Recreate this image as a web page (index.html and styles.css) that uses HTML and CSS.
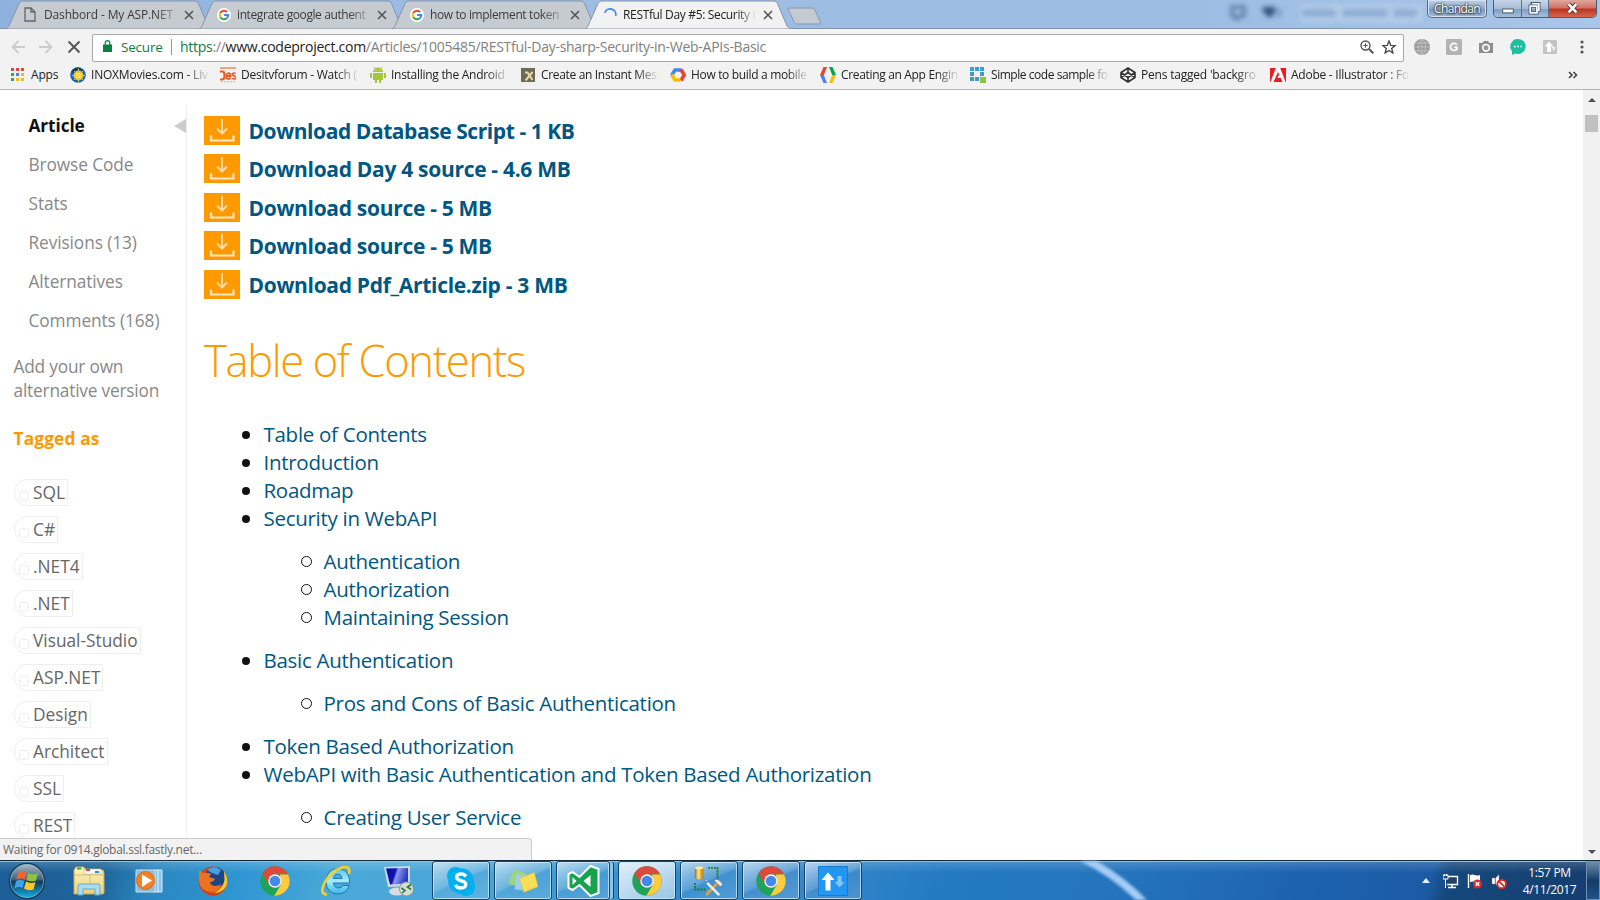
FILE: index.html
```html
<!DOCTYPE html>
<html lang="en">
<head>
<meta charset="utf-8">
<title>RESTful Day #5: Security</title>
<link rel="stylesheet" href="styles.css">
</head>
<body>
<svg class="defs" aria-hidden="true">
  <defs>
    <linearGradient id="orb" x1="0" y1="0" x2="0" y2="1"><stop offset="0" stop-color="#a9bdcb"/><stop offset=".45" stop-color="#44647e"/><stop offset=".52" stop-color="#0b3a5c"/><stop offset="1" stop-color="#16b7ea"/></linearGradient>
    <linearGradient id="folder" x1="0" y1="0" x2="0" y2="1"><stop offset="0" stop-color="#fdf5c4"/><stop offset="1" stop-color="#ecd078"/></linearGradient>
    <linearGradient id="screen" x1="0" y1="0" x2="1" y2=".25"><stop offset="0" stop-color="#0a0aa0"/><stop offset=".45" stop-color="#1111b8"/><stop offset=".55" stop-color="#8b9bf0"/><stop offset="1" stop-color="#2a3bc8"/></linearGradient>
    <linearGradient id="gold" x1="0" y1="0" x2="1" y2="0"><stop offset="0" stop-color="#a86a00"/><stop offset=".4" stop-color="#ffe68a"/><stop offset="1" stop-color="#b87800"/></linearGradient>
    <linearGradient id="ieblue" x1="0" y1="0" x2="0" y2="1"><stop offset="0" stop-color="#5cc4ee"/><stop offset=".5" stop-color="#a5ecfd"/><stop offset="1" stop-color="#38b4e8"/></linearGradient>
    <radialGradient id="fox"><stop offset="0" stop-color="#e8681c"/><stop offset=".7" stop-color="#e2571a"/><stop offset="1" stop-color="#c83c12"/></radialGradient>
    <symbol id="tab" viewBox="0 0 206 29"><path d="M0 29 L.5 28.5 Q2 28 3 26 L13 3.5 Q14 1 16.500 1 H189 Q191.500 1 192.500 3.500 L202 26 Q203 28 205.500 28.500 L206 29Z"/></symbol>
    <symbol id="x" viewBox="0 0 10 10"><path d="M1 1 9 9M9 1 1 9" fill="none" stroke="#555" stroke-width="1.600"/></symbol>
    <symbol id="google" viewBox="0 0 16 16"><circle cx="8" cy="8" r="8" fill="#fff"/><g fill="none" stroke-width="2.300"><path d="M11.600 4.600A4.900 4.900 0 0 0 3.700 5.800" stroke="#ea4335"/><path d="M3.700 5.800A4.900 4.900 0 0 0 3.700 10.200" stroke="#fbbc05"/><path d="M3.700 10.200A4.900 4.900 0 0 0 11.200 11.700" stroke="#34a853"/><path d="M11.200 11.700A4.900 4.900 0 0 0 12.900 8.100H8.100" stroke="#4285f4"/></g></symbol>
    <symbol id="chrome" viewBox="0 0 30 30"><circle cx="15" cy="15" r="14.700" fill="#1fa25a"/><path d="M2.300 7.600A14.700 14.700 0 0 1 28.200 8.500H15L9 18.200Z" fill="#dc4a3d"/><path d="M28.200 8.500A14.700 14.700 0 0 1 14.300 29.700L21 18.500 20 8.500Z" fill="#fccb40"/><circle cx="15" cy="15" r="6.700" fill="#f4f4f4"/><circle cx="15" cy="15" r="5.300" fill="#4588ec"/></symbol>
    <symbol id="dl" viewBox="0 0 36 29"><path d="M0 0H36V29H0Z" fill="#f90"/><path d="M7 19.500V24.500H29.500V19.500" fill="none" stroke="#ffe9c4" stroke-width="2.200"/><path d="M18 3V17M13 12.500 18 17.500 23 12.500" fill="none" stroke="#ffdca6" stroke-width="2"/></symbol>
  </defs>
</svg>

<div class="screen">
  <header class="tabstrip">
    <svg class="ghost" viewBox="0 0 380 28"><path d="M12 7h12v9h-4l-3 3-2-3h-3z" fill="none" stroke="#54779f" stroke-width="3"/><path d="M43 7h12v5l-5 6-7-6z" fill="#2f4f7a"/><path d="M59 9v8" stroke="#6687b0" stroke-width="3"/><rect x="80" y="5" width="122" height="17" fill="#b5cdea"/><path d="M82 13h115" stroke="#8faed3" stroke-width="8" stroke-dasharray="34 6 46 5"/></svg>
    <div class="tab"><svg class="shape"><use href="#tab"/></svg><svg class="fav page" viewBox="0 0 12 15"><path d="M1 1h6l4 4v9H1zM7 1v4h4" fill="none" stroke="#666" stroke-width="1.300"/></svg><span class="tt t1">Dashbord - My ASP.NET</span><svg class="close"><use href="#x"/></svg></div>
    <div class="tab"><svg class="shape"><use href="#tab"/></svg><svg class="fav"><use href="#google"/></svg><span class="tt t2">integrate google authent</span><svg class="close"><use href="#x"/></svg></div>
    <div class="tab"><svg class="shape"><use href="#tab"/></svg><svg class="fav"><use href="#google"/></svg><span class="tt t3">how to implement token</span><svg class="close"><use href="#x"/></svg></div>
    <div class="tab active"><svg class="shape"><use href="#tab"/></svg><svg class="fav" viewBox="0 0 16 16"><path d="M2 5.500A6.500 6.500 0 0 1 14.500 9" fill="none" stroke="#4285f4" stroke-width="2"/></svg><span class="tt t4">RESTful Day #5: Security i</span><svg class="close"><use href="#x"/></svg></div>
    <svg class="newtab" viewBox="0 0 35 18"><path d="M3 1H25Q27 1 28 3L33.500 15Q34 17 32 17H10Q8 17 7 15L1.500 3Q1 1 3 1Z" fill="#c3cad2" stroke="#8698b4"/></svg>
    <div class="user">Chandan</div>
    <div class="winbtns">
      <span class="wb"><svg viewBox="0 0 28 18"><rect x="9" y="9" width="11" height="4" fill="#fff" stroke="#4a5870"/></svg></span><span class="wb max"><svg viewBox="0 0 27 18"><g fill="none" stroke="#4a5870" stroke-width="3.400"><path d="M10.500 4V3.500h7v7h-1"/><rect x="8.500" y="6" width="7" height="7"/></g><g fill="none" stroke="#fff" stroke-width="1.700"><path d="M10.500 3.500h7v7h-1.500"/><rect x="8.500" y="6" width="7" height="7"/></g></svg></span><span class="wb shut"><svg viewBox="0 0 48 18"><path d="M20 4 28 12.500M28 4 20 12.500" stroke="#5b3038" stroke-width="4.500"/><path d="M20 4 28 12.500M28 4 20 12.500" stroke="#fff" stroke-width="2.700"/></svg></span>
    </div>
  </header>

  <nav class="toolbar">
    <svg class="nav" viewBox="0 0 16 16"><path d="M15 8H2.500M8.500 2 2.500 8l6 6" fill="none" stroke="#ccc" stroke-width="1.800"/></svg>
    <svg class="nav" viewBox="0 0 16 16"><path d="M1 8H13.500M7.500 2l6 6-6 6" fill="none" stroke="#ccc" stroke-width="1.800"/></svg>
    <svg class="nav" viewBox="0 0 16 16"><path d="M2.500 2.500l11 11M13.500 2.500l-11 11" fill="none" stroke="#555" stroke-width="1.900"/></svg>
    <div class="omnibox">
      <svg class="lock" viewBox="0 0 9 12"><path d="M0 4.500h9V12H0z" fill="#0b8043"/><path d="M2.200 5V3a2.300 2.300 0 0 1 4.600 0V5" fill="none" stroke="#0b8043" stroke-width="1.200"/></svg>
      <span class="secure">Secure</span><i class="vbar"></i>
      <span class="url"><span class="scheme">https</span>://<b>www.codeproject.com</b>/Articles/1005485/RESTful-Day-sharp-Security-in-Web-APIs-Basic</span>
      <svg class="mag" viewBox="0 0 14 14"><circle cx="5.500" cy="5.500" r="4.500" fill="none" stroke="#555" stroke-width="1.400"/><path d="M9 9l4.300 4.300" stroke="#555" stroke-width="2"/><path d="M5.500 3.300v4.400M3.300 5.500h4.400" stroke="#555"/></svg>
      <svg class="star" viewBox="0 0 14 14"><path d="M7 1l1.700 4.300 4.500.3-3.500 2.900 1.200 4.500L7 10.500 3.100 13l1.200-4.500L.8 5.600l4.500-.3z" fill="none" stroke="#444" stroke-width="1.300"/></svg>
    </div>
    <div class="exts">
      <svg viewBox="0 0 16 16"><circle cx="8" cy="8" r="8" fill="#9a9a9a"/><g fill="none" stroke="#c9c9c9" stroke-width=".8"><ellipse cx="8" cy="8" rx="3.500" ry="7.500"/><path d="M8 0v16M0 8h16M1.500 4h13M1.500 12h13"/></g></svg>
      <svg viewBox="0 0 16 16"><rect width="16" height="16" rx="1" fill="#b3b3b3"/><path d="M10.900 5.700A3.600 3.600 0 1 0 11 10V8.300H8.300" fill="none" stroke="#fff" stroke-width="1.700"/></svg>
      <svg viewBox="0 0 16 16"><path d="M1 4h3.500l1.500-2h4l1.500 2H15v10H1z" fill="#8d8d8d"/><circle cx="8" cy="8.800" r="3.300" fill="#999" stroke="#fff" stroke-width="1.600"/></svg>
      <svg viewBox="0 0 16 16"><path d="M8 0a7.500 7.500 0 1 1-2.500 14.500L2 16V12.200A7.500 7.500 0 0 1 8 0z" fill="#1dbf9f"/><path d="M4 7.500h1.700M7.200 7.500h1.700M10.400 7.500h1.700" stroke="#fff" stroke-width="1.500"/></svg>
      <svg viewBox="0 0 16 16"><rect x="1" y="1" width="14" height="14" rx="1" fill="#c4c4c4"/><path d="M7 2.500 11.500 7.500H9V13H5V7.500H2.500z" fill="#fff"/><path d="M10 8h3.500l-1.700 4z" fill="#fff"/></svg>
      <svg viewBox="0 0 16 16"><g fill="#555"><circle cx="8" cy="3" r="1.600"/><circle cx="8" cy="8" r="1.600"/><circle cx="8" cy="13" r="1.600"/></g></svg>
    </div>
  </nav>

  <nav class="bookmarks">
    <div class="apps"><svg viewBox="0 0 13 13"><g><path d="M0 0h3v3H0zM5 0h3v3H5zM10 0h3v3h-3z" fill="#ea4335"/><path d="M0 5h3v3H0z" fill="#34a853"/><path d="M5 5h3v3H5z" fill="#4285f4"/><path d="M10 5h3v3h-3zM5 10h3v3H5zM10 10h3v3h-3z" fill="#f9b916"/><path d="M0 10h3v3H0z" fill="#34a853"/></g></svg><span>Apps</span></div>
    <div class="bm"><svg viewBox="0 0 16 16"><circle cx="8" cy="8" r="7.800" fill="#1565b5"/><path d="M1 5A8 8 0 0 1 9 .5L13 4 8 8z" fill="#173f63"/><circle cx="8.500" cy="8.500" r="5" fill="#f7c62f"/><path d="M8.500 1.500v14M2 8.500h13M4 4l9 9M13 4l-9 9" stroke="#bfc54a"/><circle cx="8.500" cy="8.500" r="3" fill="#ffdf45"/></svg><span class="b1">INOXMovies.com - Liv</span></div>
    <div class="bm"><svg viewBox="0 0 16 16"><path d="M0 0h16v2H0z" fill="#f6a27a"/><path d="M0 4.500h2q2.500 0 2.500 3v2q0 3-2.500 3H0" fill="none" stroke="#f05a22" stroke-width="2.200"/><path d="M10.500 10.500q-1 2-2.500 1.500-2-.8-1.500-3.500.6-2.500 2.500-2.300 1.800.4 1.500 2.800H7M15.500 6.500q-3-1-3 1 0 1 2 1.500t1.500 2q-1 1.500-3.800.5" fill="none" stroke="#f05a22" stroke-width="1.800"/><path d="M1 14.800h14" stroke="#bbb" stroke-dasharray="2 1"/></svg><span class="b2">Desitvforum - Watch (</span></div>
    <div class="bm"><svg viewBox="0 0 16 16"><g fill="#a4c639"><path d="M3 5a5 4.500 0 0 1 10 0zM3 6h10v7H3zM0 6h2v5H0zM14 6h2v5h-2zM5 12h2v4H5zM9 12h2v4H9z"/><path d="M4 0l2 2M12 0l-2 2" stroke="#a4c639"/></g><path d="M5.500 3h1M9.500 3h1" stroke="#fff"/></svg><span class="b3">Installing the Android</span></div>
    <div class="bm"><svg viewBox="0 0 16 16"><path d="M1 1h14v14H1z" fill="#6e6a55"/><path d="M5 5.500h2.500l5 7.500M12.500 5l-7 8.500" fill="none" stroke="#ecd9a8" stroke-width="2"/></svg><span class="b4">Create an Instant Mes</span></div>
    <div class="bm"><svg viewBox="0 0 16 16"><g fill="none" stroke-width="3.600"><path d="M1.600 8.500 5 3h6.500" stroke="#4285f4"/><path d="M11 2.500 14.200 8 11 13.500" stroke="#ea4335"/><path d="M1.500 7.500 5 13h5.500" stroke="#fbbc05"/></g></svg><span class="b5">How to build a mobile</span></div>
    <div class="bm"><svg viewBox="0 0 16 16"><path d="M3.500 0H7L3.800 8H0z" fill="#ea4335"/><path d="M0 8h3.800L7 16H3.500z" fill="#4285f4"/><path d="M9 0h3.500L16 8h-3.800z" fill="#0f9d58"/><path d="M12.200 8H16l-3.500 8H9z" fill="#fbbc05"/></svg><span class="b6">Creating an App Engin</span></div>
    <div class="bm"><svg viewBox="0 0 16 16"><path d="M0 0h4v4H0zM5 0h4v4H5zM10 0h4v4h-4zM0 5h4v4H0zM10 5h4v4h-4zM0 10h4v4H0zM5 10h4v4H5z" fill="#3d9bd4"/><path d="M10 10h6v6h-6z" fill="#8cc63f"/></svg><span class="b7">Simple code sample fo</span></div>
    <div class="bm"><svg viewBox="0 0 16 16"><path d="M8 1 15 5.500v5L8 15 1 10.500v-5zM8 1v4.500M8 15v-4.500M1 5.500l7 5 7-5M1 10.500l7-5 7 5" fill="none" stroke="#333" stroke-width="1.600" stroke-linejoin="round"/></svg><span class="b8">Pens tagged 'backgro</span></div>
    <div class="bm"><svg viewBox="0 0 16 14"><path d="M0 0h16v14H0z" fill="#ec1c24"/><path d="M5.800 0h4.400L15.500 14h-3L10.800 10H7.500L8.800 7 10 8 8 4 3.500 14H.5z" fill="#fff"/></svg><span class="b9">Adobe - Illustrator : Fo</span></div>
    <svg class="more" viewBox="0 0 10 8"><path d="M1 1l3 3-3 3M5.500 1l3 3-3 3" fill="none" stroke="#444" stroke-width="1.600"/></svg>
  </nav>

  <main class="page-view">
    <aside class="sidebar">
      <ul class="menu">
        <li class="here">Article<i class="ptr"></i></li><li>Browse Code</li><li>Stats</li><li>Revisions (13)</li><li>Alternatives</li><li>Comments (168)</li>
      </ul>
      <p class="add">Add your own<br>alternative version</p>
      <h4>Tagged as</h4>
      <ul class="tags">
        <li>SQL</li><li>C#</li><li>.NET4</li><li>.NET</li><li>Visual-Studio</li><li>ASP.NET</li><li>Design</li><li>Architect</li><li>SSL</li><li>REST</li>
      </ul>
    </aside>
    <article class="article">
      <ul class="downloads">
        <li><svg><use href="#dl"/></svg><span class="tight">Download Database Script - 1 KB</span></li>
        <li><svg><use href="#dl"/></svg><span>Download Day 4 source - 4.6 MB</span></li>
        <li><svg><use href="#dl"/></svg><span>Download source - 5 MB</span></li>
        <li><svg><use href="#dl"/></svg><span>Download source - 5 MB</span></li>
        <li><svg><use href="#dl"/></svg><span>Download Pdf_Article.zip - 3 MB</span></li>
      </ul>
      <h2><span>Table of Contents</span></h2>
      <ul class="toc">
        <li><span>Table of Contents</span></li><li><span>Introduction</span></li><li><span>Roadmap</span></li>
        <li><span>Security in WebAPI</span><ul><li><span>Authentication</span></li><li><span>Authorization</span></li><li><span>Maintaining Session</span></li></ul></li>
        <li><span>Basic Authentication</span><ul><li><span>Pros and Cons of Basic Authentication</span></li></ul></li>
        <li><span>Token Based Authorization</span></li>
        <li><span>WebAPI with Basic Authentication and Token Based Authorization</span><ul><li><span>Creating User Service</span></li></ul></li>
      </ul>
    </article>
    <div class="scroll"><i class="up"></i><i class="thumb"></i><i class="down"></i></div>
    <div class="status"><span>Waiting for 0914.global.ssl.fastly.net...</span></div>
  </main>

  <footer class="taskbar">
    <svg class="swoosh" viewBox="0 0 90 40"><path d="M10-4Q48 14 78 46" fill="none" stroke="#a6cdf6" stroke-width="8"/></svg>
    <div class="pins">
      <svg class="orb" viewBox="0 0 38 38"><circle cx="19" cy="19" r="17.500" fill="url(#orb)" stroke="#173e5c" stroke-width="1.500"/><circle cx="19" cy="19" r="16.500" fill="none" stroke="#a3c4d8" stroke-opacity=".6"/><path d="M10 11q4-3 8.500-.5L17 17.500q-4-2-8.500 0z" fill="#f0652a"/><path d="M20 11q4 2.500 10 0l-2 7.500q-5 2-9.500-.5z" fill="#8cc63f"/><path d="M8 19q4-2 8.500 0l-2 7q-4-2-8 .5z" fill="#3fa4e8"/><path d="M18 19.500q4.500 2.500 9.500.5l-2 7.500q-5 2-9.500-1z" fill="#fcc827"/></svg>
      <svg class="pin" viewBox="0 0 32 30"><path d="M1 4l2-3h8l1 3h18l1 3v20l-1 1H1z" fill="url(#folder)" stroke="#c9aa54"/><path d="M11 3h17v5H11z" fill="#fff" stroke="#ccb370" stroke-width=".7"/><path d="M4 1.500h4v2H4z" fill="#2caa3c"/><path d="M13 3h4v2h-4z" fill="#e5442e"/><path d="M22 5h4v2h-4z" fill="#298fd8"/><path d="M1 9h30M17 9v8" stroke="#d9bd6a"/><path d="M5 29V20q0-2 2-2h18q2 0 2 2v9h-5v-6H10v6z" fill="#a9dcf3" stroke="#5daed6" fill-opacity=".9"/></svg>
      <svg class="pin" viewBox="0 0 32 30"><path d="M19 4h8v22h-8z" fill="#8dc4e6" stroke="#d4eefc"/><path d="M23 4v22" stroke="#e4f6ff"/><path d="M1 4h19v22H1z" fill="#8abde0" stroke="#c3e2f4"/><circle cx="10.500" cy="14.500" r="9" fill="#f58220" stroke="#e86613"/><path d="M7 8.500 17 14.500 7 21z" fill="#fff"/></svg>
      <svg class="pin" viewBox="0 0 32 30"><circle cx="16" cy="15" r="14.500" fill="url(#fox)"/><circle cx="18" cy="11.500" r="10.500" fill="#1b4584"/><path d="M10 4q7-6 14 0l-3 5q-6-1-11-5z" fill="#4b9ede"/><path d="M27 5q5 8 2.500 15-4 7-12 7 9-5 10-13z" fill="#f9c62e"/><path d="M2 4l4 3q5-1 8 1l-2 3q4 1 6 2-1 3-5 3 1 4 5 4 4 0 6-2-2 7-9 8Q3 25 2 16z" fill="#ec7222"/></svg>
      <svg class="pin" viewBox="-1 0 32 30"><use href="#chrome" width="30" height="30"/></svg>
      <svg class="pin" viewBox="0 0 32 30"><path d="M16.500 2.500C24 2.500 29 8 28.500 17H12.500Q13 22 17.500 22 20.500 22 22 19.500H28.200Q25.500 28 16.500 28 5.500 27.500 5 15.500 5.500 3 16.500 2.500zM12.500 12.500H21Q20.500 8 17 8 13 8 12.500 12.500z" fill="url(#ieblue)" stroke="#1571ad" stroke-width=".9" fill-rule="evenodd"/><path d="M6 28.500Q-2 28 3.500 17 10 5 21 1.500 30-1 28 8" fill="none" stroke="#f6cf24" stroke-width="2.600"/></svg>
      <svg class="pin" viewBox="0 0 32 30"><path d="M1 1 27 0 27 20 5 21z" fill="#d3d6dc"/><path d="M3 2.500 25 2 25 17.500 7 18.500z" fill="url(#screen)"/><ellipse cx="14" cy="25.500" rx="8" ry="4" fill="#d9dbe0"/><circle cx="23.500" cy="23" r="7" fill="#d7dbd8" stroke="#8d9694"/><path d="M18.500 22l3.500 2.500-3 2.500M28 18.500l-3.500 2.500 3.500 2.500" fill="none" stroke="#258325" stroke-width="1.600"/></svg>
    </div>
    <div class="tasks">
      <span class="task"><svg viewBox="0 0 30 30"><rect x="1" y="1" width="17" height="17" rx="8.500" fill="#00aff0"/><rect x="11" y="12" width="18" height="18" rx="8.500" fill="#00aff0"/><circle cx="15" cy="15" r="12.800" fill="#00aff0"/><path d="M20 10.500Q18 7.700 14.500 8 10.500 8.300 10.700 11.500 11 14 15.300 14.800 20 15.800 19.800 18.500 19.500 22 15 22 10.800 22 9.500 18.800" fill="none" stroke="#fff" stroke-width="3.300"/></svg></span>
      <span class="task"><svg viewBox="0 0 32 30"><path d="M6 3 20 7 15 22 0 18z" fill="#9bd67c"/><path d="M9 8 21 9 20 25 7 24z" fill="#9ecdf2"/><path d="M12 12 28 6 32 21 17 27z" fill="#f9de57" stroke="#e0bf35" stroke-width=".7"/></svg></span>
      <span class="task vs"><svg viewBox="0 0 32 32"><path d="M23 1 31 4V28L23 31 12 20 5 25 1 23V9L5 7 12 12z" fill="#16a34e" stroke="#fff" stroke-width="2"/><path d="M23 10v12l-7-6zM5 12v8l4-4z" fill="#fff"/></svg></span>
      <span class="task on"><svg viewBox="0 0 30 30"><use href="#chrome"/></svg></span>
      <span class="task"><svg viewBox="0 0 32 32"><path d="M1 2h9v11q-4.500 2-9 0z" fill="url(#gold)"/><ellipse cx="5.500" cy="2" rx="4.500" ry="1.500" fill="#ffe899"/><path d="M15 2h10v11M1 18v7h11" fill="none" stroke="#167c2c" stroke-width="2" stroke-dasharray="2 1.200"/><path d="M13 31 26 17" stroke="#e5a32b" stroke-width="3"/><path d="M14 18 27 31" stroke="#edf0f3" stroke-width="2.600"/><path d="M11 16l3 1 1-2M21 15q5-3 10 5l-3 2-4-4z" stroke="#59616c" stroke-width=".7" fill="#e8ebef"/></svg></span>
      <span class="task"><svg viewBox="0 0 30 30"><use href="#chrome"/></svg></span>
      <span class="task"><svg viewBox="0 0 30 30"><path d="M.5.500h29v29H.5z" fill="#2196f3" stroke="#167cd0"/><path d="M10 6.500 16.500 14H12.500V24.500H7.500V14H3.500z" fill="#fff"/><path d="M19.500 10h4v6h3l-5 5.500-5-5.500h3z" fill="#84c5f8"/></svg></span>
    </div>
    <div class="tray">
      <svg class="ta" viewBox="0 0 8 5"><path d="M0 5 4 0 8 5z" fill="#e8f0f8"/></svg>
      <svg viewBox="0 0 16 16"><path d="M5 3.500h9.500v8H4" fill="#253f5c" stroke="#fff" stroke-width="1.300"/><path d="M5 14.500h8M9 12v2" stroke="#fff" stroke-width="1.500"/><path d="M2.500 6v9M0 2h5v4H0zM1.500 1v2M3.500 1v2" fill="none" stroke="#fff" stroke-width="1"/></svg>
      <svg viewBox="0 0 16 16"><path d="M1.500 1v14" stroke="#fff" stroke-width="1.400"/><path d="M3 2q3-1 5 0t5 0v7q-3 1-5 0T3 9z" fill="#fff"/><circle cx="10.500" cy="11" r="4.500" fill="#dc2929"/><path d="M8.700 9.200l3.600 3.600M12.300 9.200l-3.600 3.600" stroke="#fff" stroke-width="1.500"/></svg>
      <svg viewBox="0 0 16 16"><path d="M1 5h3V11H1zM4.500 5 8 1.500V14L4.500 11z" fill="#fff" stroke="#777" stroke-width=".4"/><circle cx="10.700" cy="11" r="4.300" fill="#fff" stroke="#e02424" stroke-width="1.900"/><path d="M8 8.300l5.400 5.400" stroke="#e02424" stroke-width="1.800"/></svg>
      <div class="clock"><span>1:57 PM</span><span>4/11/2017</span></div>
      <i class="peek"></i>
    </div>
  </footer>
</div>
</body>
</html>
```

FILE: styles.css
```css
* { box-sizing: border-box; }
body { margin: 0; font-family: "Open Sans", "Noto Sans", sans-serif; font-size: 12px; overflow: hidden; }
ul, p, h2, h4 { margin: 0; padding: 0; font-weight: normal; }
ul { list-style: none; }
svg { display: block; flex: none; }
.defs { position: absolute; width: 0; height: 0; }
.screen { width: 1600px; height: 900px; display: flex; flex-direction: column; background: #fff; overflow: hidden; }

/* tab strip */
.tabstrip { position: relative; flex: none; height: 29px; display: flex; padding-left: 6px; background: linear-gradient(90deg, #8fb2dc, #9dbde3 30%, #9dbde3 75%, #a9c6e8); border-bottom: 1px solid #7f92b0; }
.ghost { position: absolute; left: 1220px; top: 0; width: 380px; height: 28px; filter: blur(2.500px); }
.tab { position: relative; flex: none; width: 206px; height: 29px; margin-right: -13px; padding: 0 17px; display: flex; align-items: center; color: #3b3b3b; }
.shape { position: absolute; left: 0; top: 0; width: 206px; height: 29px; fill: #c6cbd2; stroke: #8595ae; stroke-width: 1; }
.tab.active { z-index: 2; color: #222; height: 30px; }
.active .shape { fill: #f2f2f2; }
.fav { position: relative; width: 14px; height: 14px; margin-left: 1px; }
.fav.page { width: 12px; height: 15px; margin: 0 2px 0 1px; }
.tt { position: relative; flex: none; width: 133px; margin-left: 6px; margin-right: 7px; white-space: nowrap; line-height: 18px; letter-spacing: -.15px; -webkit-mask-image: linear-gradient(90deg, #000 112px, transparent 137px); mask-image: linear-gradient(90deg, #000 112px, transparent 137px); }
.t2 { letter-spacing: -.4px; }
.t3 { letter-spacing: -.38px; }
.t4 { letter-spacing: -.34px; -webkit-mask-image: linear-gradient(90deg, #000 114px, transparent 134px); mask-image: linear-gradient(90deg, #000 114px, transparent 134px); }
.close { position: relative; width: 10px; height: 10px; }
.newtab { width: 35px; height: 18px; margin: 7px 0 0 9px; }
.user { position: relative; margin-left: auto; width: 60px; height: 18px; border: 1px solid #5a6a83; border-top: 0; border-radius: 0 0 5px 5px; background: linear-gradient(#bed0e6, #8fa9ca 50%, #7795bb 51%, #a3bbd9); box-shadow: inset 0 0 0 1px #d5e2f2; color: #fff; text-shadow: 0 0 2px #333, 0 0 2px #333, 0 1px 2px #333; line-height: 18px; text-align: center; letter-spacing: -.6px; }
.winbtns { position: relative; display: flex; height: 18px; margin: 0 3px 0 6px; border: 1px solid #4a5a75; border-top: 0; border-radius: 0 0 5px 5px; overflow: hidden; }
.wb { width: 28px; background: linear-gradient(#c8d6e8, #a8bcd6 50%, #7f9bc0 51%, #a5bfdd); border-right: 1px solid #5e6f8a; }
.wb.max { width: 27px; }
.wb.shut { width: 47px; border: 0; background: linear-gradient(#e0a79c, #cf7263 48%, #bb3420 52%, #d5664b); }
.wb svg { height: 18px; width: 100%; }

/* address row */
.toolbar { flex: none; height: 34px; display: flex; align-items: center; background: #f2f2f2; padding: 2px 0 0 10px; }
.nav { width: 16px; height: 16px; margin-right: 12px; }
.omnibox { width: 1312px; height: 28px; margin-left: -2px; border: 1px solid #a8a8a8; border-radius: 2px; background: #fff; display: flex; align-items: center; padding: 0 0 2px 10px; font-size: 14px; margin-top: 1px; }
.lock { width: 9px; height: 12px; margin-top: -1px; }
.secure { width: 42px; margin-left: 9px; color: #0b8043; white-space: nowrap; font-size: 13.500px; letter-spacing: -.2px; }
.vbar { width: 1px; height: 16px; margin: 0 8px; background: #999; }
.url { color: #808080; white-space: nowrap; letter-spacing: -.27px; }
.url b { font-weight: normal; color: #222; }
.scheme { color: #0b8043; }
.mag { width: 14px; height: 14px; margin-left: auto; }
.star { width: 14px; height: 14px; margin: 0 7px 0 8px; }
.exts { display: flex; gap: 16px; margin-left: 10px; }
.exts svg { width: 16px; height: 16px; }

/* bookmarks */
.bookmarks { flex: none; height: 27px; display: flex; align-items: center; background: #f2f2f2; border-bottom: 1px solid #b6b4b6; padding: 0 0 3px 11px; color: #222; }
.apps { display: flex; align-items: center; width: 59px; gap: 7px; letter-spacing: -.2px; }
.apps svg { width: 13px; height: 13px; }
.bm { width: 150px; display: flex; align-items: center; gap: 5px; }
.bm svg { width: 16px; height: 16px; }
.bm span { width: 119px; white-space: nowrap; letter-spacing: -.33px; line-height: 18px; -webkit-mask-image: linear-gradient(90deg, #000 95px, transparent 119px); mask-image: linear-gradient(90deg, #000 95px, transparent 119px); }
.bm .b1 { letter-spacing: -.2px; }
.bm .b2 { letter-spacing: -.25px; }
.bm .b3 { letter-spacing: -.28px; }
.bm .b7 { letter-spacing: -.45px; }
.bm .b8 { letter-spacing: -.2px; }
.bm .b9 { letter-spacing: -.25px; }
.more { width: 10px; height: 8px; margin-left: 148px; }

/* page */
.page-view { position: relative; flex: 1; min-height: 0; display: flex; overflow: hidden; background: #fff; }
.sidebar { width: 187px; margin-top: 15px; border-right: 1px solid #eee; padding-left: 13.500px; color: #888; font-size: 17.300px; letter-spacing: -.1px; }
.menu li { height: 39px; line-height: 41px; padding-left: 15px; position: relative; }
.menu .here { color: #111; font-weight: 700; }
.ptr { position: absolute; right: 0; top: 14px; border: 7px solid transparent; border-right: 12px solid #ccc; border-left: 0; }
.add { margin-top: 16px; line-height: 24px; letter-spacing: -.2px; }
.sidebar h4 { margin-top: 23px; line-height: 26px; color: #f90; font-weight: 700; letter-spacing: .15px; }
.tags { margin: 27px 0 0 .5px; display: flex; flex-direction: column; align-items: flex-start; gap: 10px; color: #666; letter-spacing: 0; }
.tags li { position: relative; height: 27px; line-height: 25px; padding: 0 2px 0 18px; border: 1px solid #eee; border-radius: 13px 0 0 13px; }
.tags li::before { content: ""; position: absolute; left: 4px; top: 11px; width: 8px; height: 8px; border: 1px solid #eee; border-radius: 3px; }
.article { flex: 1; padding: 26px 0 0 17px; }
.downloads li { display: flex; height: 38.400px; gap: 8.500px; font-size: 21px; font-weight: 700; color: #005782; line-height: 31px; letter-spacing: -.31px; }
.downloads .tight { letter-spacing: -.43px; }
.downloads svg { width: 36px; height: 29px; }
.article h2 { margin-top: 22px; font-size: 43.500px; font-weight: 300; color: #f90; line-height: 62px; letter-spacing: -1.350px; }
.toc { margin-top: 28px; padding-left: 59.500px; font-size: 20.500px; line-height: 28px; color: #005782; letter-spacing: -.28px; }
.toc li { position: relative; }
.toc li::before { content: ""; position: absolute; left: -22px; top: 11px; width: 8px; height: 8px; border-radius: 50%; background: #111; }
.toc ul { padding: 15px 0 15px 60px; }
.toc ul li::before { left: -23px; top: 9.500px; background: none; border: 1px solid #111; width: 9px; height: 9px; }
.scroll { width: 17px; background: #f1f1f1; display: flex; flex-direction: column; align-items: center; padding: 8px 0 6px; }
.up, .down { border: 4px solid transparent; border-top: 0; border-bottom-color: #505050; }
.down { border-top: 4px solid #505050; border-bottom: 0; margin-top: auto; }
.thumb { width: 13px; height: 17px; background: #c1c1c1; margin-top: 13px; }
.status { position: absolute; left: 0; bottom: 0; width: 532px; height: 22px; background: #f2f2f2; border: 1px solid #ccc; border-left: 0; border-bottom: 0; border-radius: 0 4px 0 0; padding-left: 3px; line-height: 22px; color: #666; font-size: 12px; letter-spacing: -.28px; }

/* taskbar */
.taskbar { position: relative; flex: none; height: 40px; display: flex; border-top: 1px solid #14283c; box-shadow: inset 0 1px 0 #8bc3e2; background: linear-gradient(180deg, rgba(255,255,255,.18), rgba(255,255,255,0) 30%), linear-gradient(105deg, #1c5e97 0, #1d6399 100px, #2b86c0 150px, #2f97d3 240px, #4aa9d8 330px, #4aa5d8 470px, #2f8cce 650px, #3a8acb 760px, #2379c2 920px, #2474bd 1090px, #1d62b0 1260px, #1c5ba4 1385px, #16487c 1405px, #133a69 1600px); }
.swoosh { position: absolute; left: 1070px; top: 0; width: 90px; height: 39px; filter: blur(1.500px); }
.pins { display: flex; align-items: center; width: 432px; padding-left: 8px; }
.orb { width: 38px; height: 38px; margin-right: 27px; }
.pin { width: 32px; height: 30px; margin-right: 30px; }
.pin:last-child { margin-right: 0; }
.tasks { display: flex; gap: 4px; position: relative; }
.task { width: 58px; height: 39px; display: flex; align-items: center; justify-content: center; border: 1px solid #17446b; border-radius: 3px; box-shadow: inset 0 0 0 1px rgba(210,235,250,.75); background: linear-gradient(155deg, rgba(255,255,255,.6), rgba(255,255,255,.2) 48%, rgba(255,255,255,.05) 52%, rgba(255,255,255,.15)); }
.task svg { width: 30px; height: 30px; }
.task.on { background: linear-gradient(155deg, rgba(255,255,255,.85), rgba(255,255,255,.5)); }
.task.vs { width: 54px; margin-right: 4px; box-shadow: inset 0 0 0 1px rgba(210,235,250,.75), 4px 0 0 -1px #8ec4e8, 5px 0 0 -1px #17446b; }
.task.vs svg { width: 33px; height: 32px; }
.tray { margin-left: auto; display: flex; align-items: center; gap: 8px; color: #fff; }
.tray svg { width: 16px; height: 16px; }
.tray .ta { width: 8px; height: 5px; margin-right: 5px; }
.clock { width: 67px; padding-left: 2px; display: flex; flex-direction: column; align-items: center; line-height: 17px; letter-spacing: -.35px; }
.peek { width: 14px; height: 39px; margin-left: -4px; border: 1px solid #6f91b1; background: linear-gradient(#6f8ba8, #1d4672 45%, #143a66 50%, #1d528a); }
```
